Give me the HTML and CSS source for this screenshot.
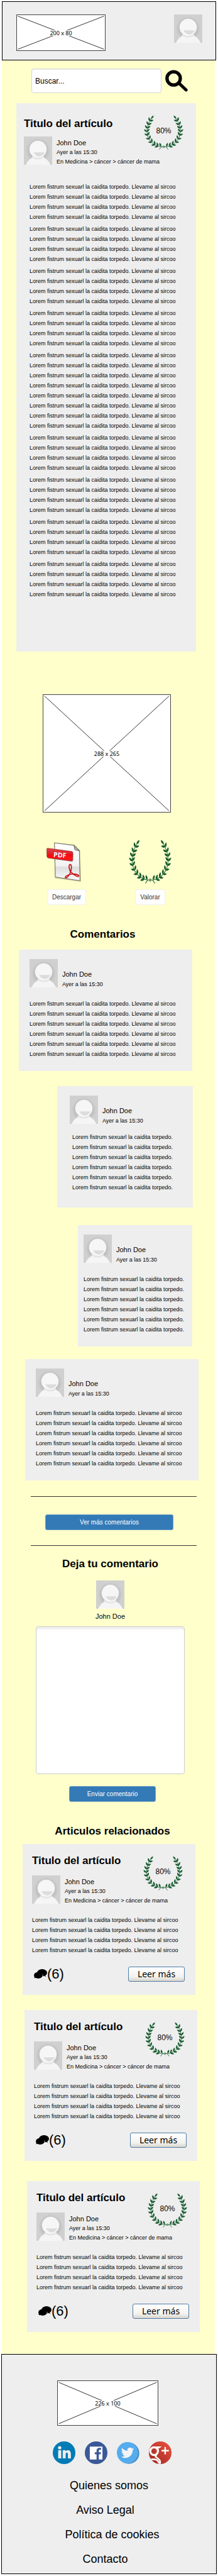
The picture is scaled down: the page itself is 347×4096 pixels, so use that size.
FILE: index.html
```html
<!DOCTYPE html>
<html lang="es">
<head>
<meta charset="utf-8">
<meta name="viewport" content="width=device-width, initial-scale=1">
<title>Titulo del artículo</title>
<link rel="stylesheet" href="styles.css">
</head>
<body>
<svg class="sprite" aria-hidden="true">
  <defs>
    <radialGradient id="head-shadow" cx="32" cy="32" r="28" gradientUnits="userSpaceOnUse">
      <stop offset="0.6" stop-color="#b8b8b8"/>
      <stop offset="1" stop-color="#d0d0d0"/>
    </radialGradient>
    <linearGradient id="banner-red" x1="0" y1="0" x2="0" y2="1">
      <stop offset="0" stop-color="#d8434a"/>
      <stop offset="0.45" stop-color="#e02028"/>
      <stop offset="0.5" stop-color="#f40a12"/>
      <stop offset="1" stop-color="#ff1a1a"/>
    </linearGradient>
    <linearGradient id="sheet" x1="0" y1="0" x2="0" y2="1">
      <stop offset="0" stop-color="#ffffff"/>
      <stop offset="0.6" stop-color="#f2f2f2"/>
      <stop offset="0.65" stop-color="#dedede"/>
      <stop offset="1" stop-color="#fafafa"/>
    </linearGradient>
    <linearGradient id="gplus-red" x1="1" y1="0" x2="0" y2="1">
      <stop offset="0.2" stop-color="#dd4b39"/>
      <stop offset="0.9" stop-color="#a12a24"/>
    </linearGradient>
    <path id="leaf" d="M0 0C2-2.700 5.500-2.700 9 0 5.500 2.500 2 2.300 0 0z"/>
  </defs>
  <symbol id="avatar" viewBox="0 0 64 64">
    <rect width="64" height="64" fill="#d0d0d0"/>
    <circle cx="32" cy="32" r="28" fill="url(#head-shadow)"/>
    <path d="M4.500 64C10 51 21 45 32 45s23 6 28 19z" fill="#f5f5f5"/>
    <path d="M17 47q15 10 30 0l-5-5H22z" fill="#e4e4e4"/>
    <circle cx="32" cy="29" r="19.500" fill="#f6f6f6"/>
    <path d="M21.500 36h26c-4 6-8 9-13 9s-10-3-13-9z" fill="#dcdcdc"/>
  </symbol>
  <symbol id="branch" viewBox="0 0 46 78" overflow="visible">
    <path d="M45 71.500H41C25 70 8.500 57 8.500 37 8.500 26 13 14 20 5M41 71.500l-5 6M45 69v5" fill="none" stroke="#175c2f" stroke-width="1.200"/>
    <g fill="#175c2f">
      <g transform="translate(40 71)"><use href="#leaf" transform="rotate(250)"/></g>
      <g transform="translate(34 70)"><use href="#leaf" transform="rotate(165)"/><use href="#leaf" transform="rotate(246)"/></g>
      <g transform="translate(27 66.500)"><use href="#leaf" transform="rotate(170)"/><use href="#leaf" transform="rotate(252)"/></g>
      <g transform="translate(20 61)"><use href="#leaf" transform="rotate(180)"/><use href="#leaf" transform="rotate(262)"/></g>
      <g transform="translate(14.500 54)"><use href="#leaf" transform="rotate(192)"/><use href="#leaf" transform="rotate(278)"/></g>
      <g transform="translate(10.500 46)"><use href="#leaf" transform="rotate(208)"/><use href="#leaf" transform="rotate(292)"/></g>
      <g transform="translate(8.500 38)"><use href="#leaf" transform="rotate(222)"/><use href="#leaf" transform="rotate(308)"/></g>
      <g transform="translate(9 30)"><use href="#leaf" transform="rotate(236)"/><use href="#leaf" transform="rotate(322)"/></g>
      <g transform="translate(11 22)"><use href="#leaf" transform="rotate(250)"/><use href="#leaf" transform="rotate(334)"/></g>
      <g transform="translate(14.500 13.500)"><use href="#leaf" transform="rotate(258)"/><use href="#leaf" transform="rotate(345)"/></g>
      <g transform="translate(18 8)"><use href="#leaf" transform="rotate(308)"/></g>
    </g>
  </symbol>
  <symbol id="wreath" viewBox="0 0 92 78" preserveAspectRatio="none">
    <use href="#branch" width="46" height="78"/>
    <use href="#branch" width="46" height="78" transform="translate(92 0) scale(-1 1)"/>
  </symbol>
  <symbol id="bubbles" viewBox="0 0 29 22">
    <path d="M19 19l9 0-4-4z" fill="#fff"/>
    <path d="M0 21l5-1-3-2z" fill="#fff"/>
    <ellipse cx="18" cy="8" rx="11" ry="8"/>
    <path d="M19 12l8 6-5-8z"/>
    <ellipse cx="9.500" cy="13.500" rx="9.500" ry="7"/>
    <path d="M1 15l0 5 6-2z"/>
    <path d="M19 12l1 5M21 16l4 1" stroke="#eee" stroke-width="1"/>
  </symbol>
</svg>

<header class="top">
  <div class="frame frame-logo">
    <svg viewBox="0 0 100 100" preserveAspectRatio="none" aria-hidden="true"><path d="M1 3L99 97M99 3L1 97"/></svg>
    <span>200 x 80</span>
  </div>
  <svg class="avatar" role="img" aria-label="Usuario"><use href="#avatar"/></svg>
</header>

<main class="page">
  <form class="search" role="search">
    <input class="search-box" type="text" placeholder="Buscar..." aria-label="Buscar">
    <button class="search-go" type="button" aria-label="Buscar">
      <svg viewBox="0 0 51 49" aria-hidden="true"><circle cx="19" cy="19" r="15" fill="none" stroke="#000" stroke-width="7.500"/><path d="M31 30L47 45" stroke="#000" stroke-width="7" stroke-linecap="round"/></svg>
    </button>
  </form>

  <article class="article">
    <h1 class="title">Titulo del artículo</h1>
    <div class="score"><svg aria-hidden="true"><use href="#wreath"/></svg><span>80%</span></div>
    <div class="author">
      <svg class="avatar" aria-hidden="true"><use href="#avatar"/></svg>
      <div class="meta"><p class="name">John Doe</p><p>Ayer a las 15:30</p><p>En Medicina &gt; cáncer &gt; cáncer de mama</p></div>
    </div>
    <div class="body">
      <div class="part">
        <p>Lorem fistrum sexuarl la caidita torpedo. Llevame al sircoo<br>Lorem fistrum sexuarl la caidita torpedo. Llevame al sircoo<br>Lorem fistrum sexuarl la caidita torpedo. Llevame al sircoo<br>Lorem fistrum sexuarl la caidita torpedo. Llevame al sircoo</p>
        <p>Lorem fistrum sexuarl la caidita torpedo. Llevame al sircoo<br>Lorem fistrum sexuarl la caidita torpedo. Llevame al sircoo<br>Lorem fistrum sexuarl la caidita torpedo. Llevame al sircoo<br>Lorem fistrum sexuarl la caidita torpedo. Llevame al sircoo</p>
        <p>Lorem fistrum sexuarl la caidita torpedo. Llevame al sircoo<br>Lorem fistrum sexuarl la caidita torpedo. Llevame al sircoo<br>Lorem fistrum sexuarl la caidita torpedo. Llevame al sircoo<br>Lorem fistrum sexuarl la caidita torpedo. Llevame al sircoo</p>
        <p>Lorem fistrum sexuarl la caidita torpedo. Llevame al sircoo<br>Lorem fistrum sexuarl la caidita torpedo. Llevame al sircoo<br>Lorem fistrum sexuarl la caidita torpedo. Llevame al sircoo<br>Lorem fistrum sexuarl la caidita torpedo. Llevame al sircoo</p>
        <p>Lorem fistrum sexuarl la caidita torpedo. Llevame al sircoo<br>Lorem fistrum sexuarl la caidita torpedo. Llevame al sircoo<br>Lorem fistrum sexuarl la caidita torpedo. Llevame al sircoo<br>Lorem fistrum sexuarl la caidita torpedo. Llevame al sircoo</p>
      </div>
      <div class="part">
        <p>Lorem fistrum sexuarl la caidita torpedo. Llevame al sircoo<br>Lorem fistrum sexuarl la caidita torpedo. Llevame al sircoo<br>Lorem fistrum sexuarl la caidita torpedo. Llevame al sircoo<br>Lorem fistrum sexuarl la caidita torpedo. Llevame al sircoo</p>
        <p>Lorem fistrum sexuarl la caidita torpedo. Llevame al sircoo<br>Lorem fistrum sexuarl la caidita torpedo. Llevame al sircoo<br>Lorem fistrum sexuarl la caidita torpedo. Llevame al sircoo<br>Lorem fistrum sexuarl la caidita torpedo. Llevame al sircoo</p>
        <p>Lorem fistrum sexuarl la caidita torpedo. Llevame al sircoo<br>Lorem fistrum sexuarl la caidita torpedo. Llevame al sircoo<br>Lorem fistrum sexuarl la caidita torpedo. Llevame al sircoo<br>Lorem fistrum sexuarl la caidita torpedo. Llevame al sircoo</p>
        <p>Lorem fistrum sexuarl la caidita torpedo. Llevame al sircoo<br>Lorem fistrum sexuarl la caidita torpedo. Llevame al sircoo<br>Lorem fistrum sexuarl la caidita torpedo. Llevame al sircoo<br>Lorem fistrum sexuarl la caidita torpedo. Llevame al sircoo</p>
        <p>Lorem fistrum sexuarl la caidita torpedo. Llevame al sircoo<br>Lorem fistrum sexuarl la caidita torpedo. Llevame al sircoo<br>Lorem fistrum sexuarl la caidita torpedo. Llevame al sircoo<br>Lorem fistrum sexuarl la caidita torpedo. Llevame al sircoo</p>
      </div>
    </div>
  </article>

  <div class="frame frame-photo">
    <svg viewBox="0 0 100 100" preserveAspectRatio="none" aria-hidden="true"><path d="M1 1L99 99M99 1L1 99"/></svg>
    <span>288 x 265</span>
  </div>

  <div class="actions">
    <div class="action">
      <svg class="pdf" viewBox="0 0 78 91" role="img" aria-label="PDF">
        <path d="M17 2L63 7L76 20L78 91L19 83z" fill="#8d8d60" opacity="0.5"/>
        <path d="M18 3.300L62 9L74.300 21.500L75.700 88.700L20 80.400z" fill="url(#sheet)" stroke="#444" stroke-width="1"/>
        <path d="M62 9L64 18.500L74.300 21.500z" fill="#bbb" stroke="#333" stroke-width="1"/>
        <path d="M3 17L58 24.500Q60.500 25 60.500 27.500L60 43.500Q60 46 57 45.500L3 38Z" fill="#555" opacity="0.500"/>
        <path d="M3 15.300L57 22.500Q59.500 23 59.500 25.500L59 41.500Q59 44.500 56 44L3.500 36.800Q1 36.300 1 34L0.500 17.500Q0.500 15 3 15.300z" fill="url(#banner-red)" stroke="#8e1015" stroke-width="0.800"/>
        <text class="pdf-label" x="30" y="36" text-anchor="middle" transform="rotate(5 30 31)">PDF</text>
        <path d="M55 71C50 60 50 52 53.500 52C57 52 57 60 55 67C53 74 47 84 43 82C40 80 47 76 55 74C63 72 73 75 73 78C72 81 64 78 55 69" fill="none" stroke="#c8161d" stroke-width="2.400" stroke-linejoin="round"/>
      </svg>
      <button class="plain" type="button">Descargar</button>
    </div>
    <div class="action">
      <svg class="laurel" aria-hidden="true"><use href="#wreath"/></svg>
      <button class="plain" type="button">Valorar</button>
    </div>
  </div>

  <section class="comments">
    <h2 class="title heading heading-comments">Comentarios</h2>
    <article class="comment">
      <div class="author"><svg class="avatar" aria-hidden="true"><use href="#avatar"/></svg><div class="meta"><p class="name">John Doe</p><p>Ayer a las 15:30</p></div></div>
      <p class="text">Lorem fistrum sexuarl la caidita torpedo. Llevame al sircoo<br>Lorem fistrum sexuarl la caidita torpedo. Llevame al sircoo<br>Lorem fistrum sexuarl la caidita torpedo. Llevame al sircoo<br>Lorem fistrum sexuarl la caidita torpedo. Llevame al sircoo<br>Lorem fistrum sexuarl la caidita torpedo. Llevame al sircoo<br>Lorem fistrum sexuarl la caidita torpedo. Llevame al sircoo</p>
    </article>
    <article class="comment reply">
      <div class="author"><svg class="avatar" aria-hidden="true"><use href="#avatar"/></svg><div class="meta"><p class="name">John Doe</p><p>Ayer a las 15:30</p></div></div>
      <p class="text">Lorem fistrum sexuarl la caidita torpedo.<br>Lorem fistrum sexuarl la caidita torpedo.<br>Lorem fistrum sexuarl la caidita torpedo.<br>Lorem fistrum sexuarl la caidita torpedo.<br>Lorem fistrum sexuarl la caidita torpedo.<br>Lorem fistrum sexuarl la caidita torpedo.</p>
    </article>
    <article class="comment reply-deep">
      <div class="author"><svg class="avatar" aria-hidden="true"><use href="#avatar"/></svg><div class="meta"><p class="name">John Doe</p><p>Ayer a las 15:30</p></div></div>
      <p class="text">Lorem fistrum sexuarl la caidita torpedo.<br>Lorem fistrum sexuarl la caidita torpedo.<br>Lorem fistrum sexuarl la caidita torpedo.<br>Lorem fistrum sexuarl la caidita torpedo.<br>Lorem fistrum sexuarl la caidita torpedo.<br>Lorem fistrum sexuarl la caidita torpedo.</p>
    </article>
    <article class="comment comment-last">
      <div class="author"><svg class="avatar" aria-hidden="true"><use href="#avatar"/></svg><div class="meta"><p class="name">John Doe</p><p>Ayer a las 15:30</p></div></div>
      <p class="text">Lorem fistrum sexuarl la caidita torpedo. Llevame al sircoo<br>Lorem fistrum sexuarl la caidita torpedo. Llevame al sircoo<br>Lorem fistrum sexuarl la caidita torpedo. Llevame al sircoo<br>Lorem fistrum sexuarl la caidita torpedo. Llevame al sircoo<br>Lorem fistrum sexuarl la caidita torpedo. Llevame al sircoo<br>Lorem fistrum sexuarl la caidita torpedo. Llevame al sircoo</p>
    </article>
    <div class="more"><button class="primary" type="button">Ver más comentarios</button></div>
  </section>

  <form class="write">
    <h2 class="title heading">Deja tu comentario</h2>
    <svg class="avatar" aria-hidden="true"><use href="#avatar"/></svg>
    <p class="name">John Doe</p>
    <textarea class="write-box" aria-label="Comentario"></textarea>
    <button class="primary" type="button">Enviar comentario</button>
  </form>

  <section class="related">
    <h2 class="title heading heading-related">Articulos relacionados</h2>
    <article class="teaser">
      <h3 class="title">Titulo del artículo</h3>
      <div class="score"><svg aria-hidden="true"><use href="#wreath"/></svg><span>80%</span></div>
      <div class="author"><svg class="avatar" aria-hidden="true"><use href="#avatar"/></svg><div class="meta"><p class="name">John Doe</p><p>Ayer a las 15:30</p><p>En Medicina &gt; cáncer &gt; cáncer de mama</p></div></div>
      <p class="text">Lorem fistrum sexuarl la caidita torpedo. Llevame al sircoo<br>Lorem fistrum sexuarl la caidita torpedo. Llevame al sircoo<br>Lorem fistrum sexuarl la caidita torpedo. Llevame al sircoo<br>Lorem fistrum sexuarl la caidita torpedo. Llevame al sircoo</p>
      <div class="foot"><span class="count"><svg aria-hidden="true"><use href="#bubbles"/></svg>(6)</span><button class="read" type="button">Leer más</button></div>
    </article>
    <article class="teaser teaser-second">
      <h3 class="title">Titulo del artículo</h3>
      <div class="score"><svg aria-hidden="true"><use href="#wreath"/></svg><span>80%</span></div>
      <div class="author"><svg class="avatar" aria-hidden="true"><use href="#avatar"/></svg><div class="meta"><p class="name">John Doe</p><p>Ayer a las 15:30</p><p>En Medicina &gt; cáncer &gt; cáncer de mama</p></div></div>
      <p class="text">Lorem fistrum sexuarl la caidita torpedo. Llevame al sircoo<br>Lorem fistrum sexuarl la caidita torpedo. Llevame al sircoo<br>Lorem fistrum sexuarl la caidita torpedo. Llevame al sircoo<br>Lorem fistrum sexuarl la caidita torpedo. Llevame al sircoo</p>
      <div class="foot"><span class="count"><svg aria-hidden="true"><use href="#bubbles"/></svg>(6)</span><button class="read" type="button">Leer más</button></div>
    </article>
    <article class="teaser teaser-third">
      <h3 class="title">Titulo del artículo</h3>
      <div class="score"><svg aria-hidden="true"><use href="#wreath"/></svg><span>80%</span></div>
      <div class="author"><svg class="avatar" aria-hidden="true"><use href="#avatar"/></svg><div class="meta"><p class="name">John Doe</p><p>Ayer a las 15:30</p><p>En Medicina &gt; cáncer &gt; cáncer de mama</p></div></div>
      <p class="text">Lorem fistrum sexuarl la caidita torpedo. Llevame al sircoo<br>Lorem fistrum sexuarl la caidita torpedo. Llevame al sircoo<br>Lorem fistrum sexuarl la caidita torpedo. Llevame al sircoo<br>Lorem fistrum sexuarl la caidita torpedo. Llevame al sircoo</p>
      <div class="foot"><span class="count"><svg aria-hidden="true"><use href="#bubbles"/></svg>(6)</span><button class="read" type="button">Leer más</button></div>
    </article>
  </section>
</main>

<footer class="bottom">
  <div class="frame frame-footer">
    <svg viewBox="0 0 100 100" preserveAspectRatio="none" aria-hidden="true"><path d="M1 3L99 97M99 3L1 97"/></svg>
    <span>226 x 100</span>
  </div>
  <nav class="social" aria-label="Redes sociales">
    <a href="#linkedin" aria-label="LinkedIn"><svg viewBox="0 0 50 50"><circle cx="25" cy="25" r="25" fill="#007bb6"/><g fill="#eee"><circle cx="15.300" cy="14" r="3.700"/><rect x="12" y="19.500" width="6.700" height="18"/><path d="M22 19.500h6.300v2.500c2-3.800 11.700-4.800 11.700 5.500v10h-6.500v-9c0-5.500-5-5-5 0v9H22z"/></g></svg></a>
    <a href="#facebook" aria-label="Facebook"><svg viewBox="0 0 50 50"><circle cx="25" cy="25" r="25" fill="#3b5998"/><path d="M11 11.500h28v28.500h-8V28.500h4l.600-4.500H31v-3c0-1.600.7-2.500 2.500-2.500H36v-4c-5.500-.800-10 .500-10 6V24h-4v4.500h4V40H11z" fill="#fff"/></svg></a>
    <a href="#twitter" aria-label="Twitter"><svg viewBox="0 0 50 50"><circle cx="26" cy="26" r="23.500" fill="#4188bf"/><circle cx="23.500" cy="25" r="23.500" fill="#55acee"/><path transform="translate(9.500 11) scale(1.180)" fill="#f4f4f4" d="M23.953 4.570a10 10 0 01-2.825.775 4.958 4.958 0 002.163-2.723c-.951.555-2.005.959-3.127 1.184a4.920 4.920 0 00-8.384 4.482C7.690 8.095 4.067 6.130 1.640 3.162a4.822 4.822 0 00-.666 2.475c0 1.710.870 3.213 2.188 4.096a4.904 4.904 0 01-2.228-.616v.060a4.923 4.923 0 003.946 4.827 4.996 4.996 0 01-2.212.085 4.936 4.936 0 004.604 3.417 9.867 9.867 0 01-6.102 2.105c-.390 0-.779-.023-1.170-.067a13.995 13.995 0 007.557 2.209c9.053 0 13.998-7.496 13.998-13.985 0-.210 0-.420-.015-.630A9.935 9.935 0 0024 4.590z"/></svg></a>
    <a href="#googleplus" aria-label="Google+"><svg viewBox="0 0 50 50"><clipPath id="gp-clip"><circle cx="25" cy="25" r="25"/></clipPath><g clip-path="url(#gp-clip)"><rect width="50" height="50" fill="url(#gplus-red)"/><g fill="none" stroke="#fff"><ellipse cx="11.500" cy="21.500" rx="8.500" ry="8.500" stroke-width="4.500"/><path d="M10 12.300h15l-4 2.500h-3" stroke-width="2.200"/><path d="M17 30c-8 5 8 7 8 15 0 3-1 5-3 6M0 42c5-3 10-3 14-2 5 1 7 4 8 8" stroke-width="3.600"/><path d="M28 20.500h16M36 12.500v16" stroke-width="3.300"/></g></g></svg></a>
  </nav>
  <ul class="links">
    <li><a href="#somos">Quienes somos</a></li>
    <li><a href="#legal">Aviso Legal</a></li>
    <li><a href="#cookies">Política de cookies</a></li>
    <li><a href="#contacto">Contacto</a></li>
  </ul>
</footer>
</body>
</html>
```
FILE: styles.css
```css
* {
  box-sizing: border-box;
}

body {
  margin: 0;
  padding: 2px 2px 3px;
  background: #fff;
  color: #000;
  font: 9px/16px "Liberation Sans", Arial, sans-serif;
}

p,
h1,
h2,
h3,
ul {
  margin: 0;
  padding: 0;
}

button,
input,
textarea {
  font-family: inherit;
  color: inherit;
  margin: 0;
}

svg {
  display: block;
}

.sprite {
  position: absolute;
  width: 0;
  height: 0;
}

/* Shared pieces */

.avatar {
  width: 45px;
  height: 45px;
  flex: none;
}

.title {
  font-size: 17px;
  line-height: 20px;
  font-weight: bold;
}

.heading {
  text-align: center;
}

.name {
  font-size: 11px;
}

.author {
  display: flex;
  gap: 7px;
}

.meta {
  padding-top: 3px;
  line-height: 15px;
  white-space: nowrap;
}

.text,
.body {
  white-space: nowrap;
}

.frame {
  display: grid;
  place-items: center;
  background: #fff;
  border: 1px solid #444;
}

.frame > * {
  grid-area: 1 / 1;
}

.frame svg {
  width: 100%;
  height: 100%;
}

.frame path {
  fill: none;
  stroke: #333;
  stroke-width: 1px;
  vector-effect: non-scaling-stroke;
}

.frame span {
  background: #fff;
  font-family: "Noto Sans", sans-serif;
  line-height: 9px;
}

.score {
  position: absolute;
  top: 19px;
  right: 19px;
  display: grid;
  place-items: center;
  width: 65px;
  height: 55px;
}

.score > * {
  grid-area: 1 / 1;
}

.score svg {
  width: 100%;
  height: 100%;
}

.score span {
  padding-bottom: 6px;
  font-size: 12px;
}

.primary {
  height: 25px;
  padding: 0;
  border: 1px solid #6d9cc0;
  border-radius: 3px;
  background: #337ab7;
  color: #fff;
  font-size: 10px;
}

/* Header */

.top {
  display: flex;
  justify-content: space-between;
  align-items: flex-start;
  height: 94px;
  margin: 0 1px;
  padding: 20px 21px 0 22px;
  border: 1px solid #000;
  background: #eee;
}

.frame-logo {
  width: 142px;
  height: 58px;
}

/* Page */

.page {
  margin: 0 3px 0 1px;
  padding: 13px 0 35px;
  background: #ffc;
}

.search {
  display: flex;
  gap: 6px;
  padding: 0 43px 0 47px;
}

.search-box {
  flex: 1;
  min-width: 0;
  height: 39px;
  padding: 0 5px;
  border: 1px solid #d6d6d6;
  border-radius: 4px;
  background: #fff;
  box-shadow: inset 0 1px 1px #eee;
  font-size: 12px;
}

.search-box::placeholder {
  color: #000;
  opacity: 1;
}

.search-go {
  width: 36px;
  height: 39px;
  padding: 0;
  border: 0;
  background: none;
}

.search-go svg {
  width: 36px;
  height: 35px;
}

.article {
  position: relative;
  margin: 16px 30px 0 23px;
  padding: 23px 12px 83px;
  background: #eee;
}

.article .author {
  margin-top: 10px;
}

.body {
  margin-top: 24px;
  padding-left: 9px;
}

.part {
  display: grid;
  gap: 3px;
}

.frame-photo {
  height: 188px;
  margin: 68px 70px 0 65px;
}

.actions {
  display: flex;
  justify-content: space-between;
  align-items: flex-end;
  padding: 43px 68px 0 71px;
}

.action {
  display: grid;
  justify-items: center;
  gap: 9px;
}

.pdf {
  width: 55px;
  height: 64px;
  margin: 0 9px 3px 0;
}

.pdf-label {
  fill: #fff;
  font: bold 15px "Open Sans", sans-serif;
}

.laurel {
  width: 70px;
  height: 70px;
}

.plain {
  height: 25px;
  padding: 0 7px;
  border: 1px solid #f0f0f0;
  border-radius: 4px;
  background: #fff;
  color: #333;
  font-size: 10px;
}

/* Comments */

.comments {
  margin-top: 37px;
}

.heading-comments {
  padding-right: 18px;
}

.comment {
  min-height: 193px;
  margin: 14px 36px 0 27px;
  padding: 15px 0 0 17px;
  background: #eee;
}

.comment .meta {
  padding-top: 16px;
  line-height: 16px;
}

.comment .text {
  margin-top: 15px;
}

.reply {
  margin: 24px 35px 0 88px;
  padding-left: 20px;
}

.reply .text {
  margin-top: 10px;
  padding-left: 4px;
}

.reply-deep {
  margin: 28px 36px 0 121px;
  padding-left: 9px;
}

.comment-last {
  margin: 20px 26px 0 37px;
}

.more {
  display: grid;
  margin: 25px 29px 0 46px;
  padding: 28px 37px 24px 23px;
  border-top: 1px solid #333;
  border-bottom: 1px solid #333;
}

/* Comment form */

.write {
  display: grid;
  justify-items: center;
  padding: 19px 48px 0 54px;
}

.write .avatar {
  margin-top: 16px;
}

.write .name {
  margin-top: 5px;
  line-height: 15px;
}

.write-box {
  display: block;
  width: 100%;
  height: 235px;
  margin: 8px 0 19px;
  border: 1px solid #ccc;
  border-radius: 4px;
  background: #fff;
  box-shadow: inset 0 4px #f1f1f1;
  resize: none;
}

.write .primary {
  width: 138px;
  margin-left: 7px;
}

/* Related articles */

.related {
  margin-top: 37px;
}

.heading-related {
  padding-left: 13px;
}

.teaser {
  position: relative;
  margin: 10px 31px 0 33px;
  padding: 17px 17px 21px 15px;
  background: #eee;
}

.teaser-second {
  margin: 24px 28px 0 36px;
}

.teaser-third {
  margin: 32px 24px 0 40px;
}

.teaser .author {
  margin-top: 13px;
}

.teaser .text {
  margin-top: 15px;
}

.foot {
  display: flex;
  justify-content: space-between;
  align-items: center;
  margin-top: 18px;
  padding-left: 3px;
}

.count {
  display: flex;
  align-items: center;
  font-size: 22px;
  line-height: 24px;
}

.count svg {
  width: 21px;
  height: 16px;
}

.read {
  width: 90px;
  height: 24px;
  padding: 0;
  border: 1px solid #4f7ca6;
  border-radius: 3px;
  background: linear-gradient(#fff, #f2f2ee 70%, #d8d4ca);
  font: 14px/20px "Noto Sans", sans-serif;
}

/* Footer */

.bottom {
  display: grid;
  justify-items: center;
  padding: 41px 0 13px;
  border: 1px solid #000;
  background: #eee;
}

.frame-footer {
  width: 161px;
  height: 72px;
  margin-right: 4px;
}

.social {
  display: flex;
  gap: 15px;
  margin-top: 25px;
  padding-left: 10px;
}

.social svg {
  width: 36px;
  height: 36px;
}

.links {
  display: grid;
  gap: 19px;
  margin-top: 24px;
  list-style: none;
  text-align: center;
  font-size: 18px;
  line-height: 20px;
}

.links li:nth-child(even) {
  padding-right: 12px;
}

.links li:nth-child(3) {
  padding-left: 10px;
}

.links a {
  color: #000;
  text-decoration: none;
}
```
